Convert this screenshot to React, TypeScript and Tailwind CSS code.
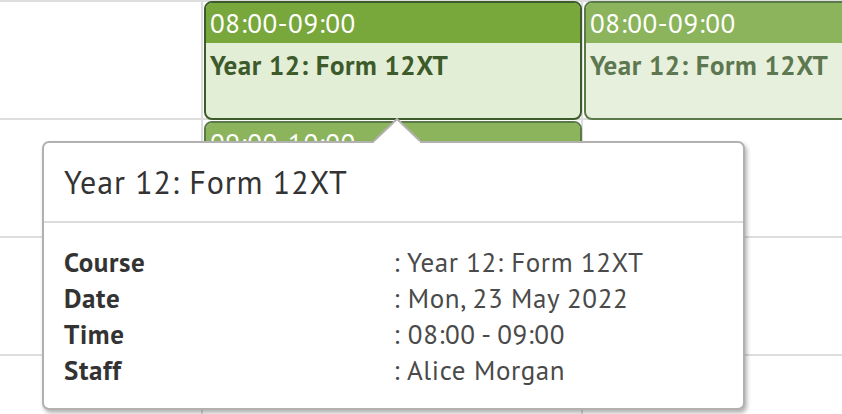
import React from "react";

type Slot = {
  time: string;
  title?: string;
  tone: "active" | "muted";
};

const tones = {
  active: {
    card: "border-[#3d5a2b] bg-[#e3eed7]",
    head: "bg-[#78a73c]",
    text: "text-[#3d5a2b]",
  },
  muted: {
    card: "border-[#5b7a4a] bg-[#e7f0dc]",
    head: "bg-[#8bb45c]",
    text: "text-[#5d7850]",
  },
};

function EventCard({ slot, className = "" }: { slot: Slot; className?: string }) {
  const t = tones[slot.tone];
  return (
    <div className={`overflow-hidden rounded-[8px] border-2 ${t.card} ${className}`}>
      <div className={`h-[40px] pl-[4px] text-[27px] leading-[40px] tracking-[0.6px] text-white ${t.head}`}>
        {slot.time}
      </div>
      {slot.title && (
        <div className={`pl-[4px] pt-[6px] text-[27px] font-bold leading-[32px] tracking-[0.5px] ${t.text}`}>
          {slot.title}
        </div>
      )}
    </div>
  );
}

const details = [
  { label: "Course", value: "Year 12: Form 12XT" },
  { label: "Date", value: "Mon, 23 May 2022" },
  { label: "Time", value: "08:00 - 09:00" },
  { label: "Staff", value: "Alice Morgan" },
];

export default function App() {
  const rows = [0, 1, 2, 3];
  const cols = [0, 1, 2];

  return (
    <div
      className="relative h-[414px] w-[842px] overflow-hidden bg-white"
      style={{ fontFamily: '"PT Sans", Lato, "Noto Sans", sans-serif' }}
    >
      <div className="grid h-full grid-cols-[203px_380px_259px] grid-rows-[118px_118px_118px_60px] border-t-2 border-[#dedede]">
        {rows.map((r) =>
          cols.map((c) => (
            <div
              key={`${r}-${c}`}
              className={`border-[#dedede] ${r < 3 ? "border-b-2" : ""} ${c < 2 ? "border-r-2" : ""}`}
              style={{ gridRowStart: r + 1, gridColumnStart: c + 1 }}
            />
          )),
        )}
        <EventCard
          slot={{ time: "08:00-09:00", title: "Year 12: Form 12XT", tone: "active" }}
          className="col-start-2 row-start-1 -mt-px ml-px h-[119px] w-[378px]"
        />
        <EventCard
          slot={{ time: "08:00-09:00", title: "Year 12: Form 12XT", tone: "muted" }}
          className="col-start-3 row-start-1 -mt-px ml-px h-[119px] w-[270px]"
        />
        {/* next slot, mostly under the tooltip */}
        <EventCard
          slot={{ time: "09:00-10:00", tone: "muted" }}
          className="col-start-2 row-start-2 mt-px ml-px h-[116px] w-[378px]"
        />
      </div>

      {/* tooltip */}
      <div className="absolute left-[42px] top-[141px] h-[269px] w-[703px] rounded-[7px] border-2 border-[#b3b0b0] bg-white shadow-[2px_3px_4px_rgba(0,0,0,0.3)]">
        <div className="border-b-2 border-[#dcdcdc] px-[20px] py-[21px] text-[32px] leading-[36px] tracking-[0.9px] text-[#333]">
          Year 12: Form 12XT
        </div>
        <table className="mx-[20px] mt-[21px] w-[659px] table-fixed text-[27px] leading-[36px] tracking-[0.6px]">
          <tbody>
            {details.map((d) => (
              <tr key={d.label}>
                <td className="w-1/2 p-0 font-bold text-[#333]">{d.label}</td>
                <td className="w-1/2 p-0 text-[#4a4a4a]">: {d.value}</td>
              </tr>
            ))}
          </tbody>
        </table>
      </div>
      <svg className="absolute left-[373px] top-[118px]" width="48" height="26" viewBox="0 0 48 26">
        <polygon points="1,23 24,0.5 47,23 47,26 1,26" fill="#fff" />
        <polyline points="1,23 24,1 47,23" fill="none" stroke="#b3b0b0" strokeWidth="2" />
      </svg>
    </div>
  );
}
